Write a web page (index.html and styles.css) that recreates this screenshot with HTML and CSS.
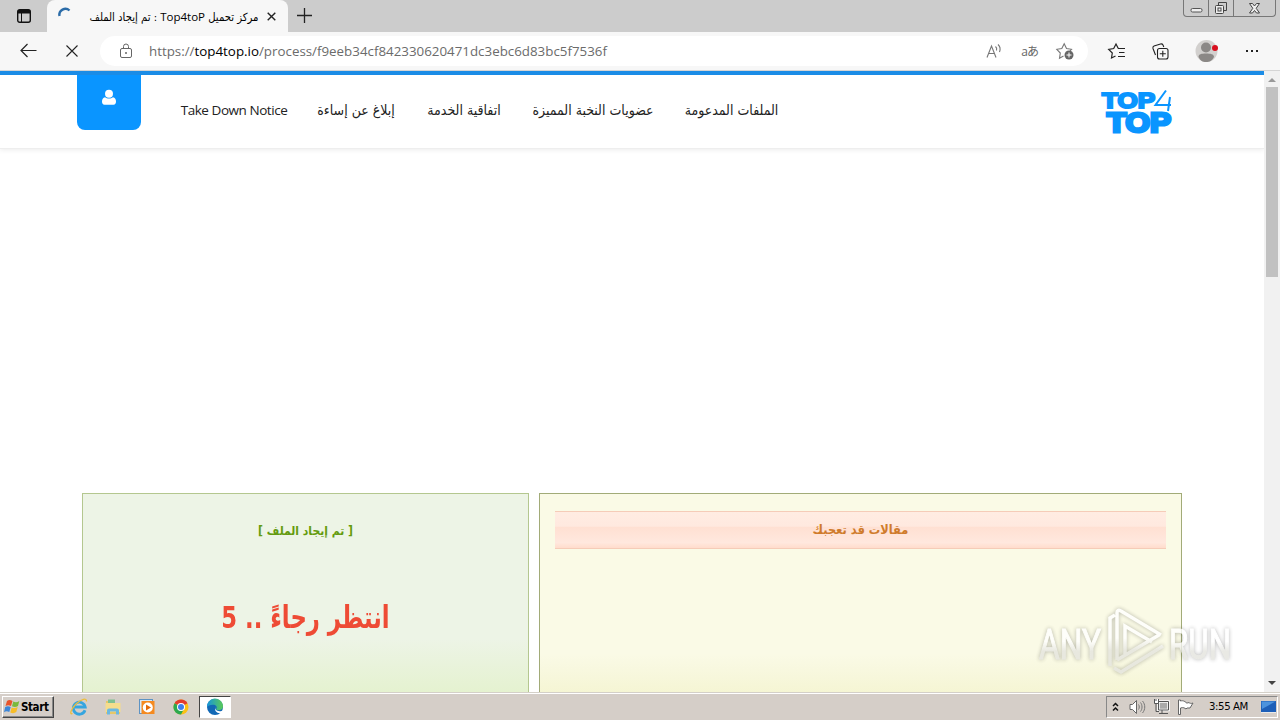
FILE: index.html
```
<!DOCTYPE html>
<html lang="ar">
<head>
    <meta charset="UTF-8">
    <title>مركز تحميل Top4toP : تم إيجاد الملف</title>
    <link rel="stylesheet" href="styles.css">
</head>
<body>
    <div class="tabs">
        <div class="tab-menu">
            <svg width="16" height="16" viewBox="0 0 16 16"><rect x="1.7" y="1.7" width="12.6" height="12.6" rx="2" fill="none" stroke="#111" stroke-width="1.4"/><path d="M2 2h12v3.5H2z" fill="#111"/><path d="M5.500 5v9" stroke="#111" stroke-width="1"/></svg>
        </div>
        <div class="tab">
            <svg class="spinner" width="16" height="16" viewBox="0 0 16 16"><path d="M1.500 8a6 6 0 0 1 10-5.500" fill="none" stroke="#2b6ca8" stroke-width="2.4"/></svg>
            <span class="tab-title" dir="rtl"><span>مركز تحميل <b>Top4toP</b> : تم إيجاد الملف</span></span>
            <svg class="tab-close" width="9" height="9" viewBox="0 0 9 9"><path d="M.7.7l7.6 7.6M8.3.7L.7 8.3" stroke="#222" stroke-width="1.4"/></svg>
        </div>
        <svg class="new-tab" width="15" height="15" viewBox="0 0 15 15"><path d="M7.5 0v15M0 7.5h15" stroke="#222" stroke-width="1.3"/></svg>
        <div class="window-buttons">
            <span><svg width="13" height="15" viewBox="0 0 13 15"><rect x="1" y="7.500" width="11" height="3.5" rx="1.5" fill="#eee" stroke="#555"/></svg></span>
            <span><svg width="14" height="15" viewBox="0 0 14 15"><path d="M4.5 4V1.5h8v8H10" fill="none" stroke="#444"/><rect x="1.5" y="4.500" width="8" height="8" rx="1" fill="#eee" stroke="#444"/><rect x="4" y="7" width="3" height="3" fill="none" stroke="#444"/></svg></span>
            <span><svg width="13" height="13" viewBox="0 0 13 13"><path d="M1.500 1.500h3l2 2.500 2-2.500h3l-3.300 4.800 3.300 4.700h-3l-2-2.500-2 2.500h-3l3.300-4.700z" fill="#eee" stroke="#444"/></svg></span>
        </div>
    </div>

    <div class="toolbar">
        <svg class="back" width="17" height="16" viewBox="0 0 17 16"><path d="M16.500 7.500H1M7.500 1L1 7.500 7.500 14" fill="none" stroke="#222" stroke-width="1.200"/></svg>
        <svg class="stop" width="14" height="14" viewBox="0 0 14 14"><path d="M1.500 1.500l11 11M12.500 1.500l-11 11" stroke="#222" stroke-width="1.100"/></svg>
        <div class="address">
            <svg class="lock" width="14" height="17" viewBox="0 0 14 17"><rect x="1.500" y="5.500" width="11" height="9" rx="1.500" fill="none" stroke="#666"/><path d="M4.500 5.500V3.500a2.500 2.500 0 0 1 5 0v2" fill="none" stroke="#666"/><circle cx="7" cy="10" r="1" fill="#666"/></svg>
            <span class="url">https://<b>top4top.io</b>/process/f9eeb34cf842330620471dc3ebc6d83bc5f7536f</span>
            <svg class="read" width="17" height="17" viewBox="0 0 17 17"><path d="M1 14.500L5.500 3 10 14.500M2.500 10.500h6M9.500 3.500c1.200 1 1.500 2.500 1 4M12 1.500c2.200 2 2.600 4.600 1.500 7.500" fill="none" stroke="#777" stroke-width="1.100"/></svg>
            <span class="translate">aあ</span>
            <svg class="fav" width="18" height="18" viewBox="0 0 18 18"><path d="M7.500 14l-4 2.300.8-5.300L.8 7.300l5-.8L8.200 1.700l2.300 4.800 5 .8-1.500 1.500" fill="none" stroke="#777" stroke-width="1.100"/><circle cx="13" cy="13" r="4.500" fill="#666"/><path d="M13 10.500v5M10.500 13h5" stroke="#fff"/></svg>
        </div>
        <svg class="favorites" width="18" height="17" viewBox="0 0 18 17"><path d="M10.300 5.600L8 1 5.700 5.500l-5 .8L4.300 10l-.8 5L7.500 13" fill="none" stroke="#222" stroke-width="1.200"/><path d="M10 5.500h7M11 9.500h5.500M10 13.500h7" stroke="#222"/></svg>
        <svg class="collections" width="17" height="17" viewBox="0 0 17 17"><path d="M3.500 12L1 5.500c-.4-1.200 0-2 1-2.400L8.500 1c1.200-.3 2 0 2.500 1l.8 2" fill="none" stroke="#222" stroke-width="1.100"/><rect x="5.500" y="5.500" width="10.500" height="10.500" rx="2" fill="#f7f7f7" stroke="#222" stroke-width="1.100"/><path d="M10.800 7.800v6M7.800 10.800h6" stroke="#222" stroke-width="1.100"/></svg>
        <svg class="profile" width="24" height="24" viewBox="0 0 24 24"><circle cx="11.500" cy="12" r="11" fill="#d2d0ce"/><circle cx="11" cy="8.500" r="5" fill="#8b8886"/><path d="M3.500 18c0-3 3-3.500 7.500-3.500s8 .5 8 3.500c-2 4-4.500 5-8 5s-5.500-1-7.500-5z" fill="#8b8886"/><circle cx="20" cy="9" r="3" fill="#d80f1e"/></svg>
        <svg class="more" width="14" height="4" viewBox="0 0 14 4"><path d="M1 1h2v2H1zM6 1h2v2H6zM11 1h2v2h-2z" fill="#222"/></svg>
    </div>

    <div class="viewport">
        <div class="page">
            <div class="header">
                <div class="user">
                    <svg width="16" height="16" viewBox="0 0 16 16"><circle cx="8" cy="4.800" r="4" fill="#fff"/><path d="M4 8.300c2 1.700 6 1.700 8 0 2 .5 3 2 3 4.300 0 2-.8 3.200-2.500 3.200h-9C1.800 15.800 1 14.600 1 12.600c0-2.300 1-3.800 3-4.300z" fill="#fff"/></svg>
                </div>
                <div class="nav">
                    <a class="takedown">Take Down Notice</a>
                    <a class="abuse" dir="rtl">إبلاغ عن إساءة</a>
                    <a class="terms" dir="rtl">اتفاقية الخدمة</a>
                    <a class="elite" dir="rtl">عضويات النخبة المميزة</a>
                    <a class="files" dir="rtl">الملفات المدعومة</a>
                </div>
                <svg class="logo" width="74" height="46" viewBox="0 0 74 46">
                    <text x="2" y="19.200" font-size="22.500" stroke-width="2.200" textLength="53" lengthAdjust="spacingAndGlyphs">TOP</text>
                    <text x="7" y="42.500" font-size="27" stroke-width="3" textLength="64" lengthAdjust="spacingAndGlyphs">TOP</text>
                    <path d="M66 1.500L55.500 16H71M70 8l-2 14" fill="none" stroke="#0a95ff" stroke-width="2"/>
                </svg>
            </div>

            <div class="content">
                <div class="found">
                    <h3 dir="rtl"><span>[ تم إيجاد الملف ]</span></h3>
                    <p dir="rtl"><span>انتظر رجاءً .. 5</span></p>
                </div>
                <div class="articles">
                    <h3 dir="rtl"><span>مقالات قد تعجبك</span></h3>
                </div>
            </div>
        </div>
        <div class="scrollbar">
            <svg width="16" height="16" viewBox="0 0 16 16"><path d="M4 11l4-4 4 4z" fill="#999"/></svg>
            <div class="thumb"></div>
            <svg width="16" height="16" viewBox="0 0 16 16"><path d="M4 5l4 4 4-4z" fill="#444"/></svg>
        </div>
    </div>

    <div class="taskbar">
        <div class="start">
            <svg width="17" height="16" viewBox="0 0 17 16"><path d="M3 2c2-1.500 3.500-1 5.500 0L7 7C5 6 3.500 6 1.500 7z" fill="#e8542b"/><path d="M9.300 2.500c2 1 3.700 1 6-.5L14 7c-2 1.500-4 1.300-6 .3z" fill="#7ab93c"/><path d="M1.200 8c2-1.300 3.700-1 5.500 0l-1.400 5c-2-1-3.500-1-5.300.2z" fill="#3c86d8"/><path d="M7.700 8.400c2 1 3.700 1 6-.4l-1.400 5c-2 1.500-4 1.400-6 .4z" fill="#f7bd28"/></svg>
            <span>Start</span>
        </div>
        <div class="launch">
            <svg width="18" height="18" viewBox="0 0 18 18"><path d="M15 12.200A6 6 0 1 1 15.200 9H5" fill="none" stroke="#35a5df" stroke-width="2.800"/><path d="M2.500 15.500C-1 17 1 11 6 6s11-6.500 10.500-2.500" fill="none" stroke="#edbd3d" stroke-width="1.300"/></svg>
            <svg width="18" height="18" viewBox="0 0 18 18"><path d="M2 3h6l1 2h7v11H2z" fill="#e7c768"/><path d="M4 1.500h7V7H4z" fill="#7fc191"/><path d="M1.500 5h15v9h-15z" fill="#f5dd8c"/><path d="M3 16.500v-4q0-2 2-2h8q2 0 2 2v4h-3v-3H6v3z" fill="#6cb8e0"/></svg>
            <svg width="18" height="18" viewBox="0 0 18 18"><rect x="1.500" y="1.500" width="13" height="14" fill="#d9e8f5" stroke="#5d93c4"/><rect x="3.500" y="3" width="13" height="13" fill="#f58a1f"/><circle cx="9.800" cy="9.500" r="5" fill="#fff"/><path d="M8 6.500l5 3-5 3z" fill="#e36b0a"/></svg>
            <svg width="18" height="18" viewBox="0 0 18 18"><circle cx="9" cy="9" r="7.500" fill="#fbc116"/><path d="M9 9L2.500 5.200A7.500 7.500 0 0 1 15.500 5.200z" fill="#e33b2e"/><path d="M9 9L2.500 5.200A7.500 7.500 0 0 0 9 16.500l3-5.500z" fill="#2da94f"/><circle cx="9" cy="9" r="4" fill="#fff"/><circle cx="9" cy="9" r="3" fill="#3f7fec"/></svg>
        </div>
        <div class="active-app">
            <svg width="18" height="18" viewBox="0 0 18 18"><defs><linearGradient id="edge"><stop offset="0" stop-color="#1695dc"/><stop offset="1" stop-color="#5bcb55"/></linearGradient></defs><circle cx="9" cy="9" r="8" fill="#1268b5"/><path d="M1 9a8 8 0 0 1 16-1c0 3-2 4.300-4.500 4.300-2 0-3-.8-2-2 .8-1.500-.5-3.600-3.500-3.600C3.500 6.700 2 8 1 9z" fill="url(#edge)"/><path d="M9.500 8.500c-1.500 2.500 1.500 5.500 6 4.500h2l-2 2c-4 1-8-2-6-6.500z" fill="#fff"/></svg>
        </div>
        <div class="tray">
            <svg class="chevrons" width="7" height="10" viewBox="0 0 7 10"><path d="M1 4l2.500-2.500L6 4M1 8.500L3.500 6 6 8.500" fill="none" stroke="#111" stroke-width="1.500"/></svg>
            <svg class="volume" width="17" height="16" viewBox="0 0 17 16"><path d="M1 5.500h2.500l4-4v13l-4-4H1z" fill="#fff" stroke="#666"/><path d="M9.500 5.500c1 1.500 1 3.500 0 5M11.500 3.500c2 2.500 2 6.500 0 9M13.500 2c3 3.500 3 8.500 0 12" fill="none" stroke="#777"/></svg>
            <svg class="network" width="17" height="17" viewBox="0 0 17 17"><path d="M5.500 3.500h10v8.500h-10z" fill="#aaa" stroke="#fff" stroke-width="2.500"/><path d="M5.500 3.500h10v8.500h-10zM9 12v3M6 15.500h9M3 5v8.500h3" fill="none" stroke="#555"/><path d="M1.500 1v4.500h4V1M3 1v2" fill="#fff" stroke="#555"/></svg>
            <svg class="flag" width="17" height="16" viewBox="0 0 17 16"><path d="M1.500 1v14.500h2V9c3-1 4 0 5.500 1l1-1h3l3-5c-2 1-3 0-5-.5l-1 .8C7 1.500 5.500 1.500 3.500 2V1z" fill="#fff" stroke="#666"/></svg>
            <span class="clock">3:55 AM</span>
            <svg class="desktop" width="17" height="14" viewBox="0 0 17 14"><path d="M1 1h15v11H1z" fill="#1d5fb8"/><path d="M1.500 1.500h14L2 9z" fill="#4c93dd"/><path d="M1 12.500h15" stroke="#e9e9e9"/></svg>
        </div>
    </div>

    <svg class="watermark" width="204" height="72" viewBox="0 0 204 72">
        <defs><linearGradient id="fade" x2="0" y2="1"><stop offset=".45" stop-color="#fff"/><stop offset=".65" stop-color="#e4e4de"/></linearGradient></defs>
        <g fill="url(#fade)" stroke="url(#fade)">
            <text x="4" y="53" textLength="62" lengthAdjust="spacingAndGlyphs">ANY</text>
            <text x="134" y="53" textLength="62" lengthAdjust="spacingAndGlyphs">RUN</text>
        </g>
        <path d="M75 60V12l5-3M82 54V7q0-4 4-2l40 24M90 48V20l27 16M82 54l42-25M79 62l7 4 42-26" fill="none" stroke="url(#fade)" stroke-width="3.500"/>
    </svg>
</body>
</html>
```
FILE: styles.css
```
* {
    box-sizing: border-box;
}

body {
    display: flex;
    flex-direction: column;
    width: 1280px;
    height: 720px;
    margin: 0;
    overflow: hidden;
    background: #fff;
    font-family: "Noto Sans", "DejaVu Sans", sans-serif;
}

svg {
    display: block;
    flex: none;
    overflow: visible;
}

/* browser window */
.tabs {
    display: flex;
    height: 32px;
    background: #ccc;
}

.tab-menu {
    width: 47px;
    padding: 8px 0 0 16px;
}

.tab {
    display: flex;
    align-items: center;
    width: 241px;
    padding: 0 12px 0 11px;
    border-radius: 8px 8px 0 0;
    background: #f7f7f7;
}

.tab-title {
    display: flex;
    justify-content: center;
    width: 170px;
    margin: 0 8px 0 15px;
    white-space: nowrap;
    font: 11.2px "DejaVu Sans Condensed", "DejaVu Sans", sans-serif;
    color: #000;
}

.tab-title b {
    font: 11.5px "Open Sans", sans-serif;
}

.new-tab {
    margin: 8px 0 0 9px;
}

.window-buttons {
    display: flex;
    height: 17px;
    margin: 0 4px 0 auto;
    border: 1px solid #777;
    border-top: 0;
    border-radius: 0 0 4px 4px;
}

.window-buttons span {
    display: flex;
    justify-content: center;
    align-items: center;
    width: 25px;
    border-right: 1px solid #777;
}

.window-buttons span:last-child {
    width: 41px;
    border: 0;
}

.toolbar {
    display: flex;
    align-items: center;
    height: 39px;
    padding: 0 21px 0 20px;
    background: #f7f7f7;
    border-bottom: 1px solid #d5d5d5;
}

.stop {
    margin-left: 28px;
}

.address {
    display: flex;
    align-items: center;
    width: 988px;
    height: 30px;
    margin-left: 21px;
    padding: 0 14px 0 19px;
    border-radius: 15px;
    background: #fff;
}

.url {
    width: 460px;
    margin: 0 auto 0 16px;
    white-space: nowrap;
    font: 13.35px "Open Sans", sans-serif;
    color: #6b6b6b;
}

.url b {
    font-weight: normal;
    color: #000;
}

.translate {
    margin: 0 18px 0 18px;
    font: 12px "Open Sans", "Noto Sans CJK JP", sans-serif;
    letter-spacing: -1px;
    color: #666;
}

.favorites {
    margin-left: 20px;
}

.collections {
    margin-left: 26px;
}

.profile {
    margin-left: 26px;
}

.more {
    margin-left: auto;
}

/* site */
.viewport {
    display: flex;
    height: 621px;
}

.page {
    width: 1264px;
    overflow: hidden;
}

.header {
    display: flex;
    height: 78px;
    padding: 0 90px 0 77px;
    border-top: 4px solid #1b8ce6;
    border-bottom: 1px solid #eee;
    box-shadow: 0 1px 5px rgba(0, 0, 0, .08);
}

.user {
    display: flex;
    justify-content: center;
    width: 64px;
    height: 55px;
    padding-top: 14px;
    border-radius: 0 0 8px 8px;
    background: #0a95ff;
}

.nav {
    display: flex;
    gap: 30px;
    margin: 0 auto 0 40px;
    line-height: 70px;
}

.nav a {
    display: flex;
    justify-content: center;
    white-space: nowrap;
    font-family: "DejaVu Sans Condensed", "DejaVu Sans", sans-serif;
    font-size: 14px;
    color: #222;
}

.nav .takedown {
    width: 106px;
    font-family: "Open Sans", sans-serif;
    font-size: 13.5px;
    letter-spacing: -.45px;
}

.abuse,
.terms {
    width: 78px;
}

.elite {
    width: 120px;
}

.files {
    width: 97px;
}

.logo {
    margin-top: 14px;
    fill: #0a95ff;
    stroke: #0a95ff;
    font-family: "Liberation Sans", sans-serif;
    font-weight: bold;
}

.content {
    display: flex;
    gap: 10px;
    padding: 344px 82px 0;
}

.found,
.articles {
    height: 260px;
    border: 1px solid #b4c78f;
    text-align: center;
}

.found {
    width: 447px;
    background: linear-gradient(#edf4e6 0, #edf4e6 145px, #e2f1c9 215px);
}

.articles {
    width: 643px;
    padding: 17px 15px;
    border-color: #a2ab78;
    background: linear-gradient(#fafae6 0, #fafae6 160px, #f3f3cc 215px);
}

h3 {
    margin: 0;
    font: bold 12px/36px "DejaVu Sans Condensed", "DejaVu Sans", sans-serif;
}

.found h3 {
    margin-top: 19px;
    color: #649b0f;
}

.articles h3 {
    height: 38px;
    border: 1px solid #f5ccb8;
    border-width: 1px 0;
    background: linear-gradient(#ffece2 0, #ffe9df 40%, #ffe0d2 41%, #ffe8de 85%, #ffdccc 100%);
    font-size: 12.7px;
    color: #cf7b2b;
}

.found p {
    margin: 43px 0 0;
    font: bold 31px/50px "DejaVu Sans Condensed", "DejaVu Sans", sans-serif;
    transform: scaleX(.815);
    color: #ee4b35;
}

.scrollbar {
    width: 16px;
    background: #f1f1f1;
}

.thumb {
    width: 12px;
    height: 190px;
    margin: 0 2px 399px;
    background: #c1c1c1;
}

/* desktop */
.taskbar {
    display: flex;
    align-items: center;
    height: 28px;
    padding: 0 2px;
    border-top: 1px solid #d4d0c8;
    background: #d5cec8;
    box-shadow: inset 0 1px #fff;
}

.start {
    display: flex;
    align-items: center;
    width: 52px;
    height: 22px;
    padding-left: 1px;
    border: 1px solid #fff;
    border-right-color: #444;
    border-bottom-color: #444;
    box-shadow: inset -1px -1px #888;
    font: bold 11.5px "DejaVu Sans Condensed", "DejaVu Sans", sans-serif;
    letter-spacing: -.4px;
}

.launch {
    display: flex;
    gap: 16px;
    margin-left: 16px;
}

.active-app {
    display: flex;
    justify-content: center;
    align-items: center;
    width: 32px;
    height: 22px;
    margin-left: 9px;
    border: 1px solid #444;
    border-right-color: #fff;
    border-bottom-color: #fff;
    background: #fff;
}

.tray {
    display: flex;
    align-items: center;
    width: 172px;
    height: 22px;
    margin-left: auto;
    padding-left: 5px;
    border: 1px solid #888;
    border-right-color: #fff;
    border-bottom-color: #fff;
}

.volume {
    margin-left: 10px;
}

.network {
    margin-left: 7px;
}

.flag {
    margin-left: 7px;
}

.clock {
    width: 42px;
    margin-left: 15px;
    white-space: nowrap;
    font: 11.3px "DejaVu Sans Condensed", "DejaVu Sans", sans-serif;
    letter-spacing: -.4px;
}

.desktop {
    margin-left: 9px;
}

.watermark {
    position: absolute;
    left: 1035px;
    top: 606px;
    opacity: .8;
    font-family: Roboto, sans-serif;
    font-size: 43px;
    filter: drop-shadow(0 0 2px rgba(0, 0, 0, .35));
}
```
